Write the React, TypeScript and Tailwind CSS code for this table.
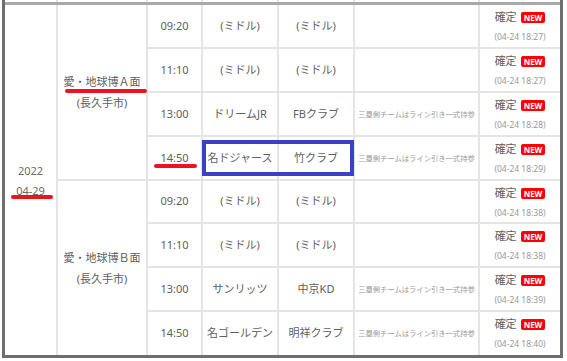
import type { FC } from "react";

type Match = {
  time: string;
  home: string;
  away: string;
  note: string;
  stamp: string;
};

type Group = {
  venue: string;
  city: string;
  matches: Match[];
};

const NOTE = "三塁側チームはライン引き一式持参";

const GROUPS: Group[] = [
  {
    venue: "愛・地球博Ａ面",
    city: "(長久手市)",
    matches: [
      { time: "09:20", home: "(ミドル)", away: "(ミドル)", note: "", stamp: "(04-24 18:27)" },
      { time: "11:10", home: "(ミドル)", away: "(ミドル)", note: "", stamp: "(04-24 18:27)" },
      { time: "13:00", home: "ドリームJR", away: "FBクラブ", note: NOTE, stamp: "(04-24 18:28)" },
      { time: "14:50", home: "名ドジャース", away: "竹クラブ", note: NOTE, stamp: "(04-24 18:29)" },
    ],
  },
  {
    venue: "愛・地球博Ｂ面",
    city: "(長久手市)",
    matches: [
      { time: "09:20", home: "(ミドル)", away: "(ミドル)", note: "", stamp: "(04-24 18:38)" },
      { time: "11:10", home: "(ミドル)", away: "(ミドル)", note: "", stamp: "(04-24 18:38)" },
      { time: "13:00", home: "サンリッツ", away: "中京KD", note: NOTE, stamp: "(04-24 18:39)" },
      { time: "14:50", home: "名ゴールデン", away: "明祥クラブ", note: NOTE, stamp: "(04-24 18:40)" },
    ],
  },
];

const COLS = "grid-cols-[53px_90px_55px_76px_76px_125px_80px]";

// --- セル ---
const Cell: FC<{ last?: boolean; className?: string; children?: React.ReactNode }> = ({
  last,
  className = "",
  children,
}) => (
  <div
    className={`flex items-center justify-center border-r-2 border-[#e4e4e4] ${
      last ? "" : "border-b-2"
    } ${className}`}
  >
    {children}
  </div>
);

const StatusCell: FC<{ stamp: string; last?: boolean }> = ({ stamp, last }) => (
  <div
    className={`flex flex-col items-center pt-[4px] border-[#e4e4e4] ${last ? "" : "border-b-2"}`}
  >
    <div className="flex items-center gap-[4px] h-[16px]">
      <span className="text-[11px] leading-[16px] text-[#5e5e5e]">確定</span>
      <span className="h-[11px] px-[3px] rounded-[2px] bg-[#ff0000] text-white text-[8px] font-bold leading-[11px]">
        NEW
      </span>
    </div>
    <div className="mt-[4px] text-[8.5px] leading-[16px] text-[#999]">{stamp}</div>
  </div>
);

export default function App() {
  return (
    <div className="relative w-[567px] h-[361px] overflow-hidden bg-white font-['Noto_Sans','Noto_Sans_CJK_JP',sans-serif]">
      <div className="ml-[2px] w-[561px] border-x-[3px] border-b-[3px] border-[#6e6e6e]">
        {/* 上の行の名残 */}
        <div className={`grid ${COLS} h-[2px]`}>
          {[0, 1, 2, 3, 4, 5].map((i) => (
            <div key={i} className="border-r-2 border-[#e4e4e4]" />
          ))}
          <div />
        </div>
        <div
          className={`grid ${COLS} grid-rows-[44px_44px_44px_44px_43px_44px_44px_43px] border-t-[3px] border-t-[#a9a9a9]`}
        >
          <div className="row-span-8 flex flex-col items-center justify-center border-r-2 border-[#e4e4e4] pt-[1px] text-[11px] leading-[20px] text-[#6a6a6a]">
            <span>2022</span>
            <span>04-29</span>
          </div>
          {GROUPS.map((g, gi) => {
            const lastGroup = gi === GROUPS.length - 1;
            return [
              <div
                key={`v${gi}`}
                className={`row-span-4 flex flex-col items-center justify-center border-r-2 border-[#e4e4e4] text-[11px] leading-[21px] text-[#5e5e5e] ${
                  lastGroup ? "" : "border-b-2"
                }`}
              >
                <span>{g.venue}</span>
                <span>{g.city}</span>
              </div>,
              ...g.matches.flatMap((m, mi) => {
                const last = lastGroup && mi === g.matches.length - 1;
                return [
                  <Cell key={`t${gi}${mi}`} last={last} className="text-[11px] text-[#5e5e5e]">
                    {m.time}
                  </Cell>,
                  <Cell key={`h${gi}${mi}`} last={last} className="text-[11px] text-[#5e5e5e]">
                    {m.home}
                  </Cell>,
                  <Cell key={`a${gi}${mi}`} last={last} className="text-[11px] text-[#5e5e5e]">
                    {m.away}
                  </Cell>,
                  <Cell key={`n${gi}${mi}`} last={last} className="text-[7.3px] text-[#999]">
                    {m.note}
                  </Cell>,
                  <StatusCell key={`s${gi}${mi}`} stamp={m.stamp} last={last} />,
                ];
              }),
            ];
          })}
        </div>
      </div>

      {/* 注釈 */}
      <div className="absolute left-[65px] top-[89px] w-[82px] h-[4px] rounded-full bg-[#e8141e]" />
      <div className="absolute left-[154px] top-[164px] w-[43px] h-[4px] rounded-full bg-[#e8141e]" />
      <div className="absolute left-[11px] top-[195px] w-[42px] h-[4px] rounded-full bg-[#e8141e]" />
      <div className="absolute left-[202px] top-[140px] w-[152px] h-[36px] border-[4px] border-[#3a41c5]" />
    </div>
  );
}
